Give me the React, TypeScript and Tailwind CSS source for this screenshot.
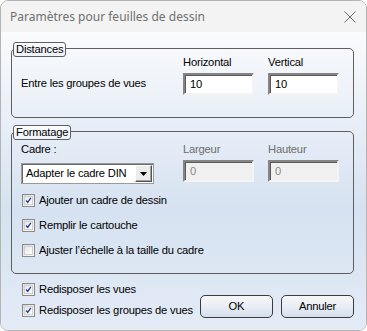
import type { ReactNode } from 'react';

const FONT = { fontFamily: '"Liberation Sans", Arial, sans-serif' };
const TXT = 'text-[11.2px] leading-[13px] tracking-[-0.2px]';

function GroupBox({ label, className, children }: { label: string; className?: string; children: ReactNode }) {
    return (
        <div className={`relative rounded-[5px] border border-[#5f5f5f] ${className ?? ''}`}>
            <span className={`absolute left-[1px] top-[-7px] h-[15px] rounded-[3px] border border-[#5f5f5f] bg-gradient-to-b from-[#fbfcfe] to-[#eef3fa] px-[2px] text-black ${TXT}`}>
                {label}
            </span>
            {children}
        </div>
    );
}

function TextField({ value, disabled }: { value: string; disabled?: boolean }) {
    return (
        <div
            className={`flex h-[22px] w-[71px] items-center border-2 border-b-[#f4f4f4] border-l-[#858585] border-r-[#f4f4f4] border-t-[#858585] pl-[5px] shadow-[inset_1px_1px_0_#5a5a5a] ${TXT} ${
                disabled ? 'bg-[#f0f0f0] text-[#8a8a8a]' : 'bg-white text-black'
            }`}
        >
            {value}
        </div>
    );
}

function Check({ checked, label }: { checked: boolean; label: string }) {
    return (
        <div className={`flex h-[13px] items-center gap-[4px] text-black ${TXT}`}>
            <span className="flex h-[13px] w-[13px] items-center justify-center border border-[#8a8a8a] bg-gradient-to-br from-[#dcdcdc] to-[#fbfbfb] p-[1px]">
                <span className="flex h-full w-full items-center justify-center border border-[#d0d0d0] bg-gradient-to-br from-[#e6e6e6] to-white">
                    {checked && (
                        <svg width="9" height="9" viewBox="0 0 9 9">
                            <path d="M1.5 4.5 L3.5 7 L7.5 1" fill="none" stroke="#2a3d9a" strokeWidth="1.7" />
                        </svg>
                    )}
                </span>
            </span>
            <span>{label}</span>
        </div>
    );
}

function Button({ children }: { children: ReactNode }) {
    return (
        <button
            type="button"
            className={`flex h-[23px] w-[73px] items-center justify-center rounded-[5px] border border-[#3c3c3c] bg-gradient-to-b from-[#f6f6f6] via-[#e9eef5] to-[#d3deec] text-black ${TXT}`}
        >
            {children}
        </button>
    );
}

export default function App() {
    return (
        <div className="h-[331px] w-[367px] bg-white" style={FONT}>
            <div className="flex h-[331px] w-[367px] flex-col overflow-hidden rounded-[8px] border border-[#b4b4b4]">
                <div className="flex h-[31px] shrink-0 items-center justify-between bg-[#f3f3f3] pl-[9px] pr-[9px]">
                    <span className="text-[12px] text-[#707070]" style={{ fontFamily: '"Noto Sans", "Open Sans", sans-serif' }}>
                        Paramètres pour feuilles de dessin
                    </span>
                    <svg width="12" height="12" viewBox="0 0 12 12" className="mr-[1px]">
                        <path d="M0.5 0.5 L11.5 11.5 M11.5 0.5 L0.5 11.5" stroke="#6a6a6a" strokeWidth="1" />
                    </svg>
                </div>

                <div className="flex flex-1 flex-col bg-gradient-to-b from-[#fafbfd] via-[#d6e2f1] via-60% to-[#e3ebf6] px-[10px] pt-[16px]">
                    <GroupBox label="Distances" className="h-[70px] w-[343px]">
                        <div className="flex pl-[9px] pt-[7px]">
                            <div className={`flex w-[162px] flex-col justify-end pb-[5px] text-black ${TXT}`}>
                                Entre les groupes de vues
                            </div>
                            <div className="flex flex-col gap-[4px]">
                                <span className={`text-black ${TXT}`}>Horizontal</span>
                                <TextField value="10" />
                            </div>
                            <div className="ml-[14px] flex flex-col gap-[4px]">
                                <span className={`text-black ${TXT}`}>Vertical</span>
                                <TextField value="10" />
                            </div>
                        </div>
                    </GroupBox>

                    <GroupBox label="Formatage" className="mt-[13px] h-[143px] w-[343px]">
                        <div className="flex pl-[9px] pt-[11px]">
                            <div className="flex w-[162px] flex-col">
                                <span className={`text-black ${TXT}`}>Cadre :</span>
                                <div className={`mt-[7px] flex h-[21px] w-[133px] items-center justify-between border border-[#9a9a9a] bg-white pl-[4px] pr-[1px] text-black shadow-[inset_1px_1px_0_#6a6a6a] ${TXT}`}>
                                    <span>Adapter le cadre DIN</span>
                                    <span className="flex h-[17px] w-[17px] items-center justify-center border border-b-[#555] border-l-[#fff] border-r-[#555] border-t-[#fff] bg-[#ececec] shadow-[inset_-1px_-1px_0_#a0a0a0]">
                                        <svg width="7" height="4" viewBox="0 0 7 4">
                                            <path d="M0 0 H7 L3.5 4 Z" fill="#000" />
                                        </svg>
                                    </span>
                                </div>
                            </div>
                            <div className="flex flex-col gap-[4px]">
                                <span className={`text-[#6d6d6d] ${TXT}`}>Largeur</span>
                                <TextField value="0" disabled />
                            </div>
                            <div className="ml-[14px] flex flex-col gap-[4px]">
                                <span className={`text-[#6d6d6d] ${TXT}`}>Hauteur</span>
                                <TextField value="0" disabled />
                            </div>
                        </div>
                        <div className="flex flex-col gap-[12px] pl-[10px] pt-[10px]">
                            <Check checked label="Ajouter un cadre de dessin" />
                            <Check checked label="Remplir le cartouche" />
                            <Check checked={false} label="Ajuster l’échelle à la taille du cadre" />
                        </div>
                    </GroupBox>

                    <div className="flex pl-[11px] pt-[9px]">
                        <div className="flex w-[178px] flex-col gap-[8px]">
                            <Check checked label="Redisposer les vues" />
                            <Check checked label="Redisposer les groupes de vues" />
                        </div>
                        <div className="flex gap-[8px] pt-[12px]">
                            <Button>OK</Button>
                            <Button>Annuler</Button>
                        </div>
                    </div>
                </div>
            </div>
        </div>
    );
}
